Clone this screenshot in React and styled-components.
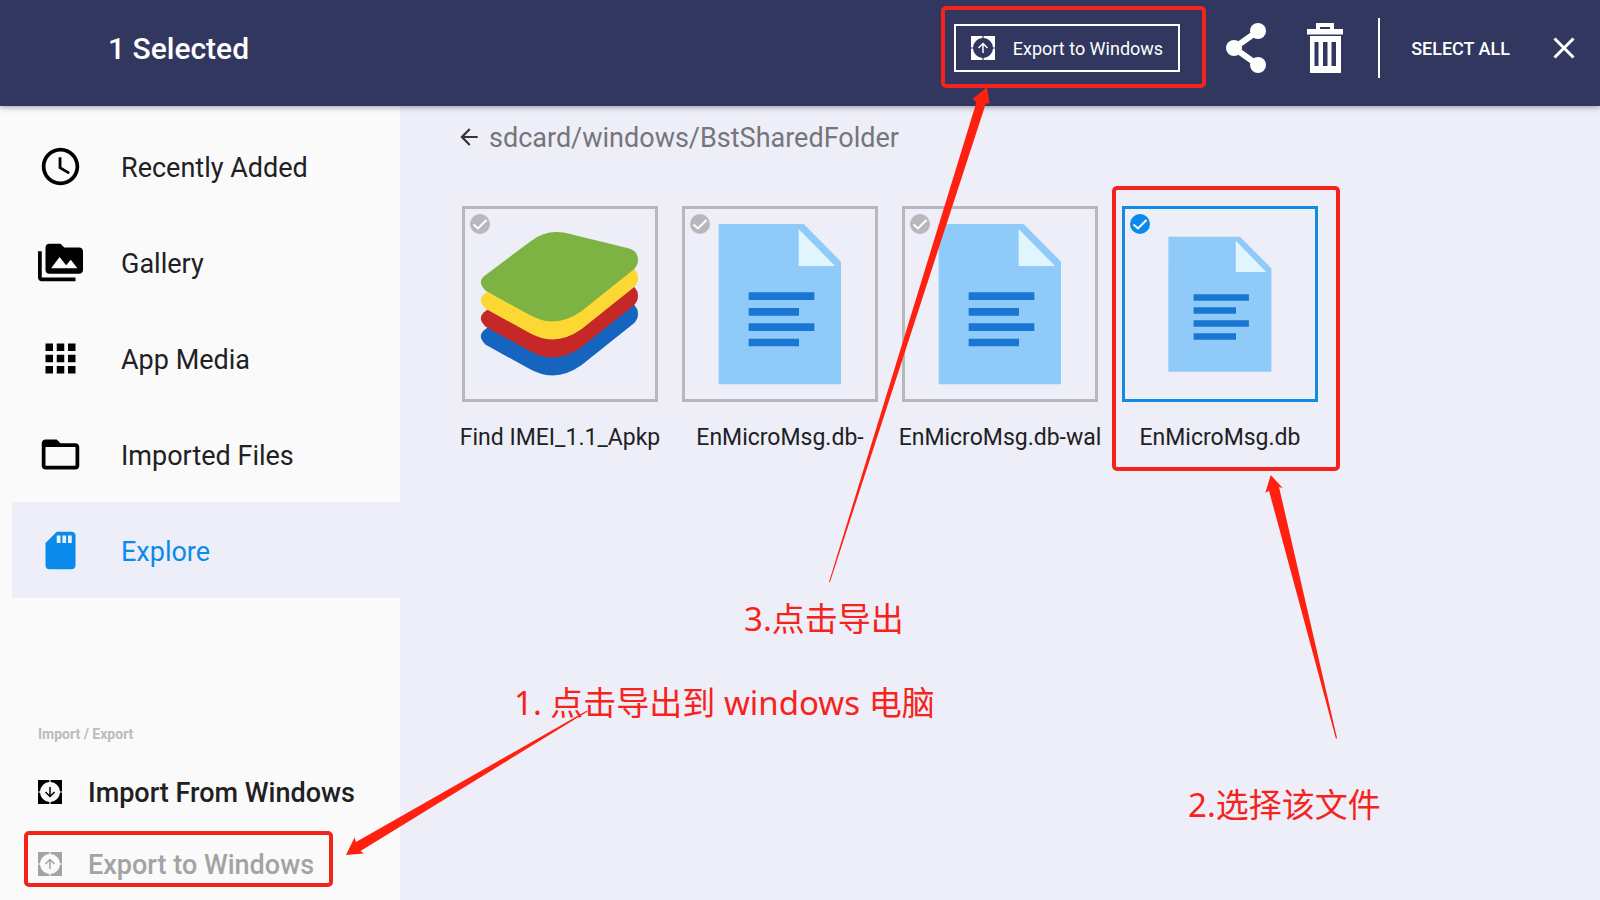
import React from "react";
import styled, { createGlobalStyle, css } from "styled-components";
import {
  MdAccessTime,
  MdPermMedia,
  MdApps,
  MdFolderOpen,
  MdSdCard,
  MdArrowBack,
} from "react-icons/md";

const GlobalStyle = createGlobalStyle`
  * { box-sizing: border-box; }
  body {
    margin: 0;
    background: #edeef7;
    font-family: Roboto, "Liberation Sans", "Noto Sans CJK SC", sans-serif;
    color: #212124;
  }
  button { font: inherit; color: inherit; background: none; border: 0; padding: 0; cursor: pointer; }
  svg { display: block; flex: none; }
`;

const Page = styled.div`
  position: relative;
  display: flex;
  flex-direction: column;
  min-height: 100vh;
`;

const Header = styled.header`
  position: relative;
  z-index: 1;
  display: flex;
  align-items: center;
  height: 106px;
  padding: 0 24px 10px 108px;
  background: #31375f;
  color: #fff;
  box-shadow: 0 1px 6px rgba(30, 30, 60, 0.45);
`;

const Title = styled.h1`
  margin: 0 auto 0 0;
  padding-top: 2px;
  font-size: 30px;
  line-height: 36px;
  font-weight: 500;
`;

const Framed = styled.div`
  position: relative;
`;

const Frame = styled.span`
  position: absolute;
  inset: ${(p) => p.$inset};
  border: 4px solid #f5231c;
  border-radius: 5px;
  pointer-events: none;
`;

const ExportButton = styled.button`
  display: flex;
  align-items: center;
  gap: 18px;
  height: 48px;
  padding: 0 15px;
  border: 2px solid #fff;
  font-size: 18px;
  white-space: nowrap;
`;

const HeaderTools = styled.div`
  display: flex;
  align-items: center;
  gap: 40px;
  margin-left: 46px;
`;

const Divider = styled.span`
  width: 2px;
  height: 60px;
  margin: 0 31px 0 34px;
  background: #fff;
`;

const SelectAll = styled.button`
  margin-right: 42px;
  font-size: 18px;
  font-weight: 500;
`;

const Body = styled.div`
  flex: 1;
  display: flex;
`;

const Sidebar = styled.aside`
  display: flex;
  flex-direction: column;
  flex: none;
  width: 400px;
  padding: 12px 0 0 12px;
  background: #fafafa;
`;

const NavItem = styled.a`
  display: flex;
  align-items: center;
  gap: 38px;
  height: 96px;
  padding-left: 26px;
  font-size: 27px;
  text-decoration: none;
  color: #212124;
  svg { color: #000; }
  ${(p) =>
    p.$active &&
    css`
      background: #edeef7;
      color: #0a8bec;
      svg { color: #0a8bec; }
    `}
`;

const NavText = styled.span`
  padding-top: 4px;
`;

const Transfer = styled.section`
  margin-top: auto;
`;

const TransferTitle = styled.h2`
  margin: 0 0 12px;
  padding-left: 26px;
  font-size: 14px;
  line-height: 20px;
  font-weight: 700;
  color: #bbbbc0;
`;

const TransferButton = styled.button`
  display: flex;
  align-items: center;
  gap: 26px;
  width: 100%;
  height: 72px;
  padding-left: 26px;
  font-size: 27px;
  font-weight: 500;
  color: ${(p) => (p.$muted ? "#a3a3a4" : "#212124")};
  svg { color: ${(p) => (p.$muted ? "#a3a3a4" : "#000")}; }
`;

const TransferText = styled.span`
  padding-top: 2px;
`;

const Main = styled.main`
  flex: 1;
  padding: 11px 50px 0;
`;

const PathBar = styled.div`
  display: flex;
  align-items: center;
  gap: 7px;
  height: 40px;
  margin: 0 0 49px 6px;
  font-size: 27px;
  color: #75757b;
  button { color: #333338; }
`;

const PathText = styled.span`
  padding-top: 2px;
`;

const Files = styled.ul`
  display: flex;
  flex-wrap: wrap;
  margin: 0;
  padding: 0;
  list-style: none;
`;

const File = styled.li`
  position: relative;
  width: 220px;
`;

const FileLabel = styled.label`
  display: flex;
  flex-direction: column;
  align-items: center;
  gap: 20px;
`;

const Thumb = styled.span`
  position: relative;
  display: flex;
  align-items: center;
  justify-content: center;
  width: 196px;
  height: 196px;
  border: 3px solid ${(p) => (p.$selected ? "#148be2" : "#b8b8bc")};
`;

const Tick = styled.span`
  position: absolute;
  top: 5px;
  left: 5px;
  display: grid;
  > * { grid-area: 1 / 1; }
  input {
    appearance: none;
    width: 20px;
    height: 20px;
    margin: 0;
    border-radius: 50%;
    background: #b8b8bc;
  }
  input:checked { background: #0a8bec; }
  svg { pointer-events: none; }
`;

const FileName = styled.span`
  font-size: 23px;
  line-height: 32px;
  white-space: nowrap;
`;

const Notes = styled.div`
  position: absolute;
  inset: 0;
  z-index: 2;
  overflow: hidden;
  pointer-events: none;
`;

const Arrows = styled.svg`
  position: absolute;
  top: 0;
  left: 0;
`;

const Note = styled.p`
  position: absolute;
  left: ${(p) => p.$x}px;
  top: ${(p) => p.$y}px;
  margin: 0;
  font-family: "Noto Sans", "Noto Sans CJK SC", sans-serif;
  font-size: 33px;
  line-height: 48px;
  white-space: nowrap;
  color: #f5231c;
`;

const TransferIcon = ({ up, size = 24 }) => (
  <svg width={size} height={size} viewBox="0 0 24 24" aria-hidden="true">
    <path
      fill="currentColor"
      fillRule="evenodd"
      d="M0 0H11.400V2A10 10 0 0 0 2 11.400H0ZM12.600 0H24V11.400H22A10 10 0 0 0 12.600 2ZM0 12.600H2A10 10 0 0 0 11.400 22V24H0ZM24 12.600V24H12.600V22A10 10 0 0 0 22 12.600Z"
    />
    <path
      fill="none"
      stroke="currentColor"
      strokeWidth="1.5"
      d={up ? "M12 17V7.500M7.500 12 12 7.500 16.500 12" : "M12 7V16.500M7.500 12 12 16.500 16.500 12"}
    />
  </svg>
);

const ShareIcon = () => (
  <svg width="40" height="50" viewBox="0 0 40 50" aria-hidden="true">
    <path d="M32 8 8 25 32 42" fill="none" stroke="#fff" strokeWidth="6" />
    <circle cx="8" cy="25" r="8" fill="#fff" />
    <circle cx="32" cy="8" r="8" fill="#fff" />
    <circle cx="32" cy="42" r="8" fill="#fff" />
  </svg>
);

const TrashIcon = () => (
  <svg width="38" height="50" viewBox="0 0 38 50" aria-hidden="true">
    <path
      fill="#fff"
      fillRule="evenodd"
      d="M10 0H28V6H37V11.500H1V6H10ZM14 4V6H24V4ZM4 13H35V50H4ZM8.500 19V43H12.500V19ZM17 19V43H21.500V19ZM25.500 19V43H30V19Z"
    />
  </svg>
);

const CloseIcon = () => (
  <svg width="24" height="24" viewBox="0 0 24 24" aria-hidden="true">
    <path d="M2.500 2.500 21.500 21.500M21.500 2.500 2.500 21.500" stroke="#fff" strokeWidth="3" />
  </svg>
);

const TickIcon = () => (
  <svg width="20" height="20" viewBox="0 0 20 20" aria-hidden="true">
    <path d="M3.500 10.500 8 14.500 16.500 6" fill="none" stroke="#fff" strokeWidth="2" />
  </svg>
);

const SHEET =
  "M130 530 L270 425 Q315 388 375 398 L565 445 Q594 452 594 480 Q594 497 580 509 L425 633 Q345 690 265 643 L137 572 Q112 550 130 530 Z";

const StackIcon = () => (
  <svg width="190" height="190" viewBox="75 327 570 570" aria-hidden="true">
    <path d={SHEET} transform="translate(0 162)" fill="#1565c0" />
    <path d={SHEET} transform="translate(0 108)" fill="#c62828" />
    <path d={SHEET} transform="translate(0 54)" fill="#fdd835" />
    <path d={SHEET} fill="#7cb342" />
  </svg>
);

const DocIcon = ({ size = 190 }) => (
  <svg width={size} height={size} viewBox="0 0 570 570" aria-hidden="true">
    <path d="M101 45H356L468 158V526H101Z" fill="#90caf9" />
    <path d="M341 60V171H450Z" fill="#e1f5fe" />
    <path
      d="M191 250H388V273H191ZM191 297H342V320H191ZM191 343H388V366H191ZM191 389H342V412H191Z"
      fill="#1976d2"
    />
  </svg>
);

const NAV = [
  { label: "Recently Added", Icon: MdAccessTime },
  { label: "Gallery", Icon: MdPermMedia },
  { label: "App Media", Icon: MdApps },
  { label: "Imported Files", Icon: MdFolderOpen },
  { label: "Explore", Icon: MdSdCard, active: true },
];

const FILES = [
  { name: "Find IMEI_1.1_Apkp", stack: true },
  { name: "EnMicroMsg.db-" },
  { name: "EnMicroMsg.db-wal" },
  { name: "EnMicroMsg.db", selected: true },
];

export default function App() {
  return (
    <Page>
      <GlobalStyle />
      <Header>
        <Title>1 Selected</Title>
        <Framed>
          <ExportButton type="button">
            <TransferIcon up />
            Export to Windows
          </ExportButton>
          <Frame $inset="-18px -26px -16px -13px" />
        </Framed>
        <HeaderTools>
          <button type="button" aria-label="Share"><ShareIcon /></button>
          <button type="button" aria-label="Delete"><TrashIcon /></button>
        </HeaderTools>
        <Divider />
        <SelectAll type="button">SELECT ALL</SelectAll>
        <button type="button" aria-label="Close"><CloseIcon /></button>
      </Header>
      <Body>
        <Sidebar>
          <nav>
            {NAV.map(({ label, Icon, active }) => (
              <NavItem key={label} href="#" $active={active}>
                <Icon size={45} aria-hidden="true" />
                <NavText>{label}</NavText>
              </NavItem>
            ))}
          </nav>
          <Transfer>
            <TransferTitle>Import / Export</TransferTitle>
            <TransferButton type="button">
              <TransferIcon />
              <TransferText>Import From Windows</TransferText>
            </TransferButton>
            <Framed>
              <TransferButton type="button" $muted>
                <TransferIcon up />
                <TransferText>Export to Windows</TransferText>
              </TransferButton>
              <Frame $inset="3px 67px 13px 12px" />
            </Framed>
          </Transfer>
        </Sidebar>
        <Main>
          <PathBar>
            <button type="button" aria-label="Back"><MdArrowBack size={26} /></button>
            <PathText>sdcard/windows/BstSharedFolder</PathText>
          </PathBar>
          <Files>
            {FILES.map(({ name, stack, selected }) => (
              <File key={name}>
                <FileLabel>
                  <Thumb $selected={selected}>
                    {stack ? <StackIcon /> : <DocIcon size={selected ? 160 : 190} />}
                    <Tick>
                      <input type="checkbox" defaultChecked={selected} />
                      <TickIcon />
                    </Tick>
                  </Thumb>
                  <FileName>{name}</FileName>
                </FileLabel>
                {selected && <Frame $inset="-20px -10px -17px 2px" />}
              </File>
            ))}
          </Files>
        </Main>
      </Body>
      <Notes>
        <Arrows width="1600" height="900" viewBox="0 0 1600 900" fill="#ff2010" aria-hidden="true">
          <path d="M346 855 354.500 837.500 356 842 587 710.500 587.500 711.500 360.500 851 364 853.500Z" />
          <path d="M1270.700 475 1282.700 488 1279 487 1337 738 1336 739 1269 490.700 1265.300 493Z" />
          <path d="M987 87 989.500 104 986 103 830 582 829 582 976.500 102 972.500 99Z" />
        </Arrows>
        <Note $x={744} $y={595}>3.点击导出</Note>
        <Note $x={514} $y={679}>1. 点击导出到 windows 电脑</Note>
        <Note $x={1188} $y={781}>2.选择该文件</Note>
      </Notes>
    </Page>
  );
}
